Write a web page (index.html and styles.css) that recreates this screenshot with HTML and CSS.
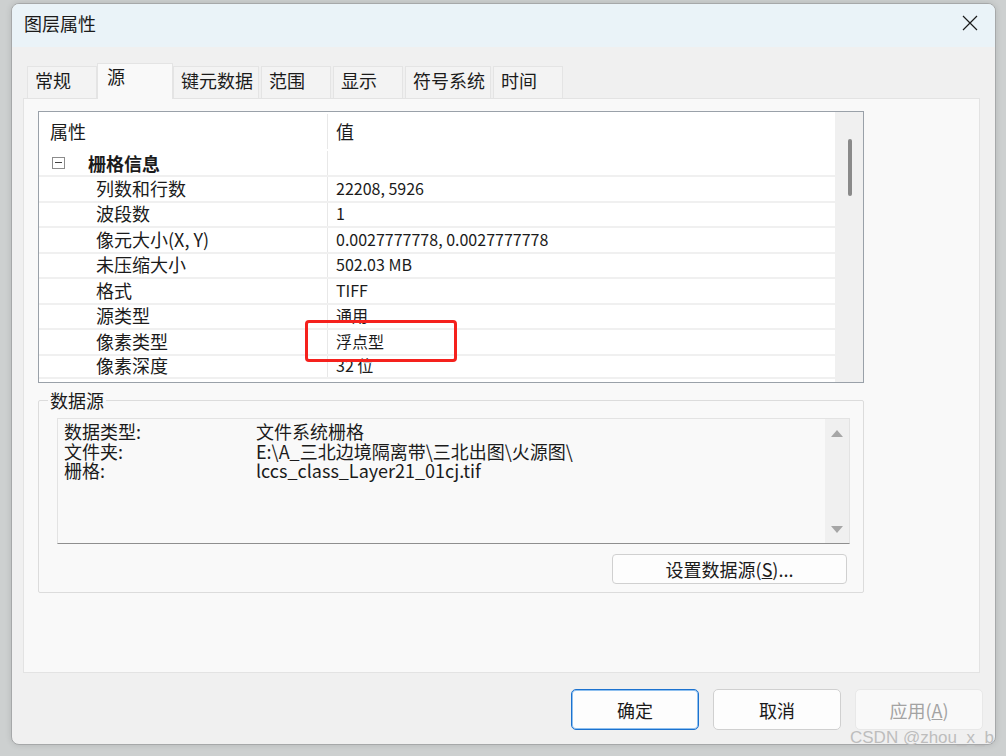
FILE: index.html
```html
<!DOCTYPE html>
<html lang="zh-CN">

<head>
    <meta charset="UTF-8">
    <title>图层属性</title>
    <link rel="stylesheet" href="styles.css">
</head>

<body>
    <div class="window">
        <!-- 标题栏 -->
        <div class="titlebar">
            <span>图层属性</span>
            <svg class="close" width="16" height="16" viewBox="0 0 16 16">
                <path d="M1 1L15 15M15 1L1 15" stroke="#1a1a1a" stroke-width="1.2" fill="none" />
            </svg>
        </div>

        <!-- 选项卡 -->
        <div class="tabs">
            <div class="tab">常规</div>
            <div class="tab active">源</div>
            <div class="tab">键元数据</div>
            <div class="tab">范围</div>
            <div class="tab">显示</div>
            <div class="tab">符号系统</div>
            <div class="tab">时间</div>
        </div>

        <div class="panel">
            <!-- 属性表 -->
            <div class="propgrid">
                <div class="pg-body">
                    <div class="pg-head">
                        <div class="col1">属性</div>
                        <div class="col2">值</div>
                    </div>
                    <div class="pg-group">
                        <div class="col1"><span class="toggle"></span><b>栅格信息</b></div>
                        <div class="col2"></div>
                    </div>
                    <div class="pg-row">
                        <div class="col1">列数和行数</div>
                        <div class="col2">22208, 5926</div>
                    </div>
                    <div class="pg-row">
                        <div class="col1">波段数</div>
                        <div class="col2">1</div>
                    </div>
                    <div class="pg-row">
                        <div class="col1">像元大小(X, Y)</div>
                        <div class="col2">0.0027777778, 0.0027777778</div>
                    </div>
                    <div class="pg-row">
                        <div class="col1">未压缩大小</div>
                        <div class="col2">502.03 MB</div>
                    </div>
                    <div class="pg-row">
                        <div class="col1">格式</div>
                        <div class="col2">TIFF</div>
                    </div>
                    <div class="pg-row">
                        <div class="col1">源类型</div>
                        <div class="col2">通用</div>
                    </div>
                    <div class="pg-row">
                        <div class="col1">像素类型</div>
                        <div class="col2">浮点型</div>
                    </div>
                    <div class="pg-row">
                        <div class="col1">像素深度</div>
                        <div class="col2">32 位</div>
                    </div>
                </div>
                <div class="pg-scroll">
                    <div class="thumb"></div>
                </div>
                <div class="highlight"></div>
            </div>

            <!-- 数据源 -->
            <fieldset class="source">
                <legend>数据源</legend>
                <div class="source-box">
                    <div class="source-text">
                        <span>数据类型:</span><span>文件系统栅格</span>
                        <span>文件夹:</span><span>E:\A_三北边境隔离带\三北出图\火源图\</span>
                        <span>栅格:</span><span>lccs_class_Layer21_01cj.tif</span>
                    </div>
                    <div class="box-scroll">
                        <span class="arrow up"></span>
                        <span class="arrow down"></span>
                    </div>
                </div>
                <div class="source-actions">
                    <button class="set-source">设置数据源(<u>S</u>)...</button>
                </div>
            </fieldset>
        </div>

        <!-- 底部按钮 -->
        <div class="footer">
            <button class="btn primary">确定</button>
            <button class="btn">取消</button>
            <button class="btn" disabled>应用(<u>A</u>)</button>
        </div>
    </div>

    <div class="watermark">CSDN @zhou_x_b</div>
</body>

</html>
```

FILE: styles.css
```css
* {
    box-sizing: border-box;
}

body {
    margin: 0;
    height: 756px;
    overflow: hidden;
    position: relative;
    background: #cdd0d0;
    font-family: "Noto Sans CJK SC", sans-serif;
    color: #1b1b1b;
}

.window {
    margin: 3px 0 0 11px;
    width: 985px;
    height: 742px;
    display: flex;
    flex-direction: column;
    background: #f0f0f0;
    border: 1px solid #a6a8a9;
    border-radius: 8px;
    overflow: hidden;
    box-shadow: 0 0 6px rgba(0, 0, 0, 0.12);
}

.titlebar {
    flex: none;
    height: 43px;
    display: flex;
    align-items: center;
    justify-content: space-between;
    padding: 0 17px 6px 12px;
    background: #eaf3f8;
    font-size: 18px;
}

/* tabs */
.tabs {
    flex: none;
    height: 51px;
    display: flex;
    align-items: flex-end;
    gap: 2px;
    padding-left: 15px;
}

.tab {
    height: 32px;
    min-width: 70px;
    padding: 0 5px 0 7px;
    font-size: 18px;
    line-height: 26px;
    background: #f3f3f3;
    border: 1px solid #e4e4e4;
    border-bottom: none;
}

.tab.active {
    height: 36px;
    min-width: 76px;
    margin: 0 -2px -1px;
    padding-left: 9px;
    line-height: 24px;
    background: #f9f9f9;
    position: relative;
    z-index: 1;
}

.panel {
    flex: none;
    height: 575px;
    margin: 0 15px 0 11px;
    padding: 12px 0 0 14px;
    background: #f9f9f9;
    border: 1px solid #e3e3e3;
}

/* property grid */
.propgrid {
    position: relative;
    width: 826px;
    height: 272px;
    display: flex;
    background: #fff;
    border: 1px solid #9aa1a9;
    overflow: hidden;
}

.pg-body {
    flex: 1;
    overflow: hidden;
    border-right: 2px solid #f0f0f0;
}

.pg-head,
.pg-group,
.pg-row {
    display: flex;
}

.col1 {
    width: 288px;
    display: flex;
    align-items: center;
    padding-bottom: 2px;
}

.col2 {
    flex: 1;
    display: flex;
    align-items: center;
    border-left: 1px solid #e8e8e8;
    padding-left: 8px;
    padding-bottom: 2px;
}

.pg-head {
    height: 39px;
    font-size: 18px;
}

.pg-head .col1 {
    padding-left: 11px;
}

.pg-head .col2 {
    margin: 2px 0;
}

.pg-group {
    height: 24px;
    font-size: 18px;
}

.pg-group .col1 {
    padding-left: 13px;
    padding-bottom: 0;
}

.toggle {
    width: 13px;
    height: 12px;
    margin-right: 23px;
    border: 1px solid #8c8c8c;
    position: relative;
}

.toggle::after {
    content: "";
    position: absolute;
    left: 2px;
    right: 2px;
    top: 4px;
    height: 1px;
    background: #444;
}

.pg-row {
    height: 25.5px;
    border-top: 2px solid #f0f0f0;
}

.pg-row:last-child {
    border-bottom: 2px solid #f0f0f0;
}

.pg-row .col1 {
    padding-left: 57px;
    font-size: 18px;
}

.pg-row .col2 {
    font-size: 16px;
}

.pg-scroll {
    width: 26px;
    padding-top: 27px;
    display: flex;
    justify-content: center;
    background: #f0f0f0;
}

.thumb {
    width: 4px;
    height: 57px;
    border-radius: 2px;
    background: #8a8a8a;
}

.highlight {
    position: absolute;
    left: 266px;
    top: 208px;
    width: 152px;
    height: 42px;
    border: 3px solid #f5211d;
    border-radius: 4px;
}

/* data source */
.source {
    width: 826px;
    margin: 7px 0 0;
    padding: 8px 13px 8px 18px;
    border: 1px solid #dcdcdc;
    border-radius: 2px;
}

.source legend {
    margin-left: -9px;
    padding: 0 2px;
    font-size: 18px;
    line-height: 20px;
}

.source-box {
    height: 126px;
    display: flex;
    background: #f9f9f9;
    border: 1px solid #e3e3e3;
    border-bottom-color: #8f8f8f;
}

.source-text {
    flex: 1;
    display: grid;
    grid-template-columns: 192px 1fr;
    align-content: start;
    padding: 3px 0 0 6px;
    font-size: 18px;
    line-height: 19.5px;
}

.box-scroll {
    width: 24px;
    display: flex;
    flex-direction: column;
    align-items: center;
    justify-content: space-between;
    padding: 11px 0 10px;
    background: #f0f0f0;
}

.arrow {
    width: 0;
    height: 0;
    border-left: 6px solid transparent;
    border-right: 6px solid transparent;
}

.arrow.up {
    border-bottom: 7px solid #a6a6a6;
}

.arrow.down {
    border-top: 7px solid #a6a6a6;
}

.source-actions {
    display: flex;
    justify-content: flex-end;
    margin-top: 10px;
    padding-right: 3px;
}

.set-source {
    width: 235px;
    height: 30px;
    font-family: inherit;
    font-size: 18px;
    color: #1b1b1b;
    background: #fdfdfd;
    border: 1px solid #d0d0d0;
    border-radius: 4px;
}

/* footer buttons */
.footer {
    display: flex;
    justify-content: flex-end;
    gap: 14px;
    padding: 16px 12px 0 0;
}

.btn {
    width: 128px;
    height: 41px;
    font-family: inherit;
    font-size: 18px;
    color: #1b1b1b;
    background: #fdfdfd;
    border: 1px solid #d0d0d0;
    border-radius: 5px;
}

.btn.primary {
    border-color: #1c72cf;
    box-shadow: inset 0 0 0 1px #8fc0ef;
}

.btn:disabled {
    color: #a3a3a3;
    background: #f9f9f9;
    border-color: #e8e8e8;
}

.watermark {
    position: absolute;
    left: 850px;
    top: 728px;
    white-space: nowrap;
    font-family: "Liberation Sans", sans-serif;
    font-size: 17px;
    color: #bdbdbd;
}
```
